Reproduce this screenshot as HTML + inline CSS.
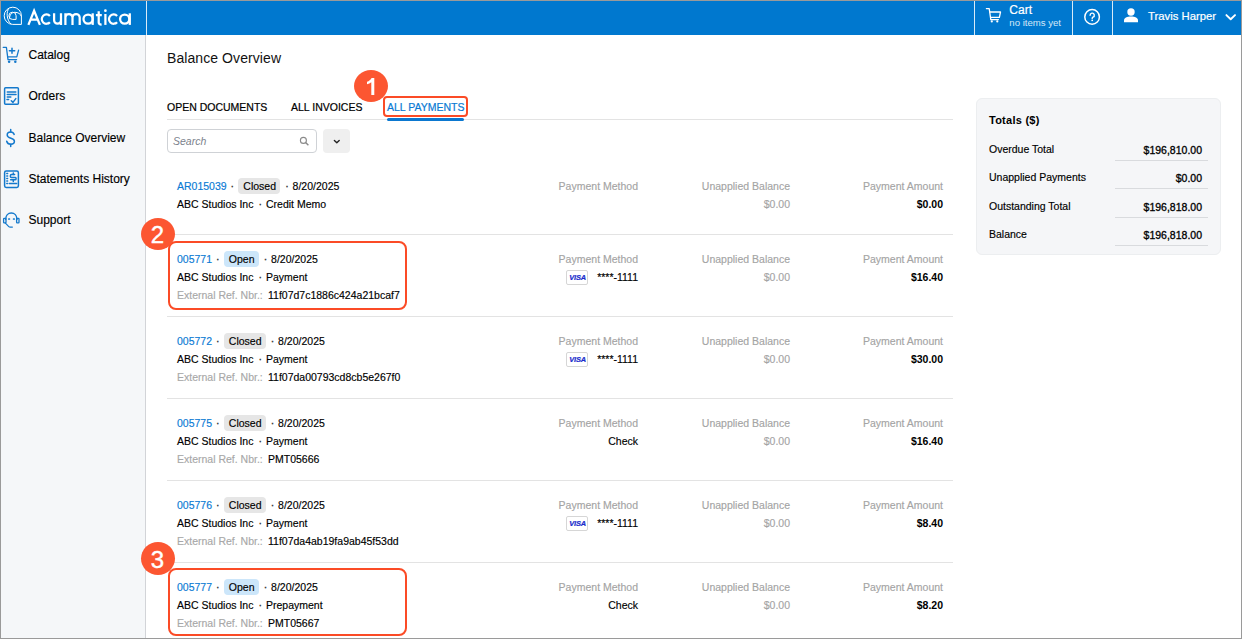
<!DOCTYPE html>
<html><head><meta charset="utf-8">
<style>
*{margin:0;padding:0;box-sizing:border-box}
html,body{width:1242px;height:639px;overflow:hidden;background:#fff}
body{font-family:"Liberation Sans",sans-serif;color:#000;position:relative}
.abs{position:absolute;white-space:nowrap}
.frame{position:absolute;left:0;top:0;width:1242px;height:639px;border:1px solid #9a9a9a;z-index:50}
.hdr{position:absolute;left:0;top:0;width:1242px;height:35px;background:#0078cf}
.vsep{position:absolute;top:0;width:1px;height:35px;background:#d8ebf8}
.side{position:absolute;left:0;top:35px;width:146px;height:604px;background:#f5f7f9;border-right:1px solid #d2d4d8}
.nav{position:absolute;left:28.5px;font-size:12px;line-height:14px;color:#000;white-space:nowrap;-webkit-text-stroke:0.15px #000}
.t{font-size:10.5px;line-height:12px;color:#000;-webkit-text-stroke:0.15px currentColor}
.tv{-webkit-text-stroke:0.3px #000}
.link{color:#0a7ad4}
.dot{color:#333;-webkit-text-stroke:0.35px #333}
.lbl{color:#a8a8a8}
.hd{color:#a4a4a4}
.b{font-weight:bold;-webkit-text-stroke:0}
.sep{position:absolute;left:167px;width:786px;height:1px;background:#e3e3e3}
.badge{position:absolute;height:16px;border-radius:4px;font-size:10.5px;line-height:16px;text-align:center;padding-left:1px;color:#000;-webkit-text-stroke:0.15px #000}
.closed{background:#e6e6e6}
.open{background:#cce6fa}
.red{position:absolute;border:2px solid #fb4b26;border-radius:8px}
.circ{position:absolute;width:34px;height:32px;border-radius:50%;background:#fc5631;color:#fff;font-size:24px;line-height:34px;text-align:center;-webkit-text-stroke:0.4px #fff}
.visa{position:absolute;width:22px;height:15px;border:1px solid #d6d6d6;border-radius:2px;background:#fff}
.visa span{position:absolute;left:2.3px;top:1.8px;font-size:7.4px;line-height:9px;font-weight:bold;font-style:italic;color:#1a2ccc;letter-spacing:-0.15px;-webkit-text-stroke:0.2px #1a2ccc}
.tab{position:absolute;top:101px;font-size:10.5px;line-height:12px;color:#000;white-space:nowrap;-webkit-text-stroke:0.2px currentColor}
svg{position:absolute;overflow:visible}
</style></head><body>
<div class="hdr"></div>
<div class="vsep" style="left:146px"></div>
<div class="vsep" style="left:974px"></div>
<div class="vsep" style="left:1072px"></div>
<div class="vsep" style="left:1112px"></div>
<!-- logo -->
<svg style="left:0;top:0" width="140" height="35" viewBox="0 0 140 35" fill="none" stroke="#fff" stroke-width="1">
<path d="M21.4 24.4 H12.8 A8.6 8.6 0 1 1 21.4 15.8 Z"/>
<path d="M8.9 8.4 C6.2 11.6 6.4 19.6 11 24.2"/>
<path d="M9.6 18.6 C9.4 14.6 12 12.3 14.8 12.3 C18 12.3 20.6 13.8 21.3 16.4"/>
<path d="M16.1 19.4 H12.6 A3.6 3.6 0 1 1 16.1 15.8 Z"/>
</svg>
<svg style="left:0;top:0" width="140" height="35" viewBox="0 0 140 35" fill="none" stroke="#fff" stroke-width="2.25">
<path d="M28.4 24.9 L34.1 10.8 L39.9 24.9 M30.9 19.5 H37.3"/>
<path d="M49.9 16 A4.65 4.65 0 1 0 49.9 22.2"/>
<path d="M54.1 13.3 V20.3 A3.45 3.45 0 0 0 61 20.3 M61 13.3 V24.9"/>
<path d="M65.4 24.9 V13.3 M65.4 17.6 A3.55 3.55 0 0 1 72.5 17.6 V24.9 M72.5 17.6 A3.6 3.6 0 0 1 79.7 17.6 V24.9"/>
<circle cx="88.1" cy="19.1" r="4.6"/>
<path d="M92.7 13.3 V24.9"/>
<path d="M98.7 11.3 V22.6 C98.7 24 99.4 24.6 101.6 24.6 M95.9 15 H101.8"/>
<path d="M105.4 14 V24.9"/>
<circle cx="105.4" cy="10.7" r="1.35" fill="#fff" stroke="none"/>
<path d="M117.1 16 A4.65 4.65 0 1 0 117.1 22.2"/>
<circle cx="124.7" cy="19.1" r="4.6"/>
<path d="M129.8 13.3 V24.9"/>
</svg>
<!-- header right -->
<svg style="left:0;top:0" width="1242" height="35" fill="none" stroke="#fff" stroke-width="1.3" stroke-linejoin="round" stroke-linecap="round">
<path d="M986.4 8.6 H989.2 L990.8 19.6 H998.4"/>
<path d="M990.2 12 H1000.5 L999.4 17.3 H991"/>
<circle cx="991.8" cy="21.4" r="1.1" fill="#fff" stroke="none"/>
<circle cx="997.3" cy="21.4" r="1.1" fill="#fff" stroke="none"/>
<circle cx="1092.1" cy="16.9" r="7.3" stroke-width="1.5"/>
<path d="M1090.1 15.3 A2.1 2.1 0 1 1 1093 17.2 C1092.4 17.6 1092.2 18 1092.2 18.6" stroke-width="1.4"/>
<rect x="1091.4" y="19.7" width="1.6" height="1.4" fill="#fff" stroke="none"/>
<path d="M1226.4 15.1 L1230.7 19.3 L1235 15.1" stroke-width="1.9"/>
</svg>
<svg style="left:0;top:0" width="1242" height="35" fill="#fff">
<circle cx="1131" cy="12" r="3.7"/>
<path d="M1124 22.3 V20.6 C1124 18 1127 16.6 1131 16.6 C1135 16.6 1138 18 1138 20.6 V22.3 Z"/>
</svg>
<div class="abs" style="left:1009.3px;top:3px;font-size:12px;line-height:14px;color:#fff;-webkit-text-stroke:0.2px #fff">Cart</div>
<div class="abs" style="left:1009.3px;top:17px;font-size:9.6px;line-height:11px;color:#d5e8f7">no items yet</div>
<div class="abs" style="left:1148px;top:10px;font-size:11.3px;line-height:12px;color:#fff;-webkit-text-stroke:0.2px #fff">Travis Harper</div>

<!-- sidebar -->
<div class="side"></div>
<svg style="left:0;top:0" width="146" height="240" fill="none" stroke="#1479cc" stroke-width="1.5" stroke-linecap="round" stroke-linejoin="round">
<!-- cart plus -->
<path d="M3.2 47.3 H6.4 L8 59.6 H16.6" stroke-width="1.3"/>
<path d="M7.8 56.8 H16.8 L18.6 50.2" stroke-width="1.3"/>
<path d="M9.4 50.7 H14.7 M12 48.2 V53.3"/>
<circle cx="9.1" cy="61.8" r="1.25" fill="#1479cc" stroke="none"/>
<circle cx="15.3" cy="61.8" r="1.25" fill="#1479cc" stroke="none"/>
<!-- orders -->
<rect x="4.6" y="87.7" width="13.8" height="16.6" rx="1"/>
<path d="M7.3 91.9 H15.8 M7.3 94.4 H16 M7.3 96.9 H10.8 M7 99.4 H8.6"/>
<path d="M11.3 100.8 L13 102.4 L15.8 98.6"/>
<!-- dollar -->
<path d="M14.2 134.4 C13.6 132.7 12.4 131.9 10.7 131.9 C8.6 131.9 7.2 133.1 7.2 134.9 C7.2 139 14.4 137.6 14.4 141.3 C14.4 143.2 12.8 144.3 10.7 144.3 C8.7 144.3 7.2 143.3 6.7 141.3"/>
<path d="M10.7 129.4 V131.9 M10.7 144.3 V146.5"/>
<!-- statements -->
<rect x="4.6" y="171.1" width="13.8" height="16.3" rx="1.6"/>
<path d="M6.8 173.5 H7.6 M6.8 176 H7.6 M6.8 178.5 H7.6 M6.8 181 H7.6 M6.8 183.5 H7.6"/>
<path d="M9.4 183.5 H16.6"/>
<path d="M14.6 174.6 H11.4 C10.6 174.6 10.4 175.1 10.4 175.8 V176.6 C10.4 177.3 10.8 177.6 11.4 177.6 H15.4 C16.1 177.6 16.1 178.2 16.1 178.7 C16.1 179.4 15.6 179.8 15 179.8 H10.6"/>
<path d="M13.3 173 V174.6 M13.3 179.8 V181.6"/>
<!-- support -->
<path d="M5.6 219.3 C5.8 215.6 8.2 213.1 11.3 213.1 C14.4 213.1 16.8 215.6 17 219.3"/>
<rect x="3.6" y="218.4" width="2.4" height="4.4" rx="0.6" stroke-width="1.3"/>
<rect x="16.6" y="218.4" width="2.4" height="4.4" rx="0.6" stroke-width="1.3"/>
<path d="M5.4 223.2 L8.8 226.6 C9.2 227 9.6 227.1 10.2 227.1 H12.4" stroke-width="1.2"/>
<path d="M8.8 219 H9.4 M13.6 219 H14.2" stroke-width="1.7"/>
</svg>
<div class="nav" style="top:48px">Catalog</div>
<div class="nav" style="top:89px">Orders</div>
<div class="nav" style="top:131px">Balance Overview</div>
<div class="nav" style="top:172px">Statements History</div>
<div class="nav" style="top:213px">Support</div>

<!-- main -->
<div class="abs" style="left:167px;top:50px;font-size:14px;line-height:16px;color:#111;letter-spacing:0.08px">Balance Overview</div>
<div class="tab" style="left:167px">OPEN DOCUMENTS</div>
<div class="tab" style="left:291px">ALL INVOICES</div>
<div class="tab" style="left:387px;color:#0a7ad4">ALL PAYMENTS</div>
<div class="abs" style="left:167px;top:119px;width:786px;height:1px;background:#e3e3e3"></div>
<div class="abs" style="left:387px;top:118px;width:77px;height:2.5px;background:#0b78d0;border-radius:2px"></div>
<!-- search -->
<div class="abs" style="left:167px;top:129px;width:150px;height:24px;border:1px solid #cfd2d6;border-radius:4px;background:#fff"></div>
<div class="abs" style="left:173px;top:135px;font-size:10.5px;line-height:12px;color:#7c828c;font-style:italic">Search</div>
<svg style="left:0;top:0" width="360" height="160" fill="none" stroke="#8a8a8a" stroke-width="1.1">
<circle cx="303.4" cy="140.4" r="3"/>
<path d="M305.6 142.6 L308.4 145.3" stroke-width="1.4"/>
</svg>
<div class="abs" style="left:323px;top:129px;width:27px;height:24px;background:#efefef;border-radius:4px"></div>
<svg style="left:0;top:0" width="360" height="160" fill="none" stroke="#222" stroke-width="1.4" stroke-linecap="round" stroke-linejoin="round">
<path d="M334.4 140.4 L336.8 142.7 L339.2 140.4"/>
</svg>

<div class="abs t link" style="left:177px;top:180px;">AR015039</div>
<div class="abs t dot" style="left:230.6px;top:180px;">&middot;</div>
<div class="badge closed" style="left:238.1px;top:178px;width:42.2px">Closed</div>
<div class="abs t dot" style="left:285.3px;top:180px;">&middot;</div>
<div class="abs t " style="left:292.6px;top:180px;">8/20/2025</div>
<div class="abs t " style="left:177px;top:198px;">ABC Studios Inc</div>
<div class="abs t dot" style="left:258.5px;top:198px;">&middot;</div>
<div class="abs t " style="left:266.0px;top:198px;">Credit Memo</div>
<div class="abs t hd" style="right:604px;top:180px;">Payment Method</div>
<div class="abs t hd" style="right:452px;top:180px;">Unapplied Balance</div>
<div class="abs t hd" style="right:299px;top:180px;">Payment Amount</div>
<div class="abs t hd" style="right:452px;top:198px;">$0.00</div>
<div class="abs t b" style="right:299px;top:198px;">$0.00</div>
<div class="sep" style="top:234px"></div>
<div class="abs t link" style="left:177px;top:253px;">005771</div>
<div class="abs t dot" style="left:216.1px;top:253px;">&middot;</div>
<div class="badge open" style="left:223.6px;top:251px;width:35.2px">Open</div>
<div class="abs t dot" style="left:263.8px;top:253px;">&middot;</div>
<div class="abs t " style="left:271.1px;top:253px;">8/20/2025</div>
<div class="abs t " style="left:177px;top:271px;">ABC Studios Inc</div>
<div class="abs t dot" style="left:258.5px;top:271px;">&middot;</div>
<div class="abs t " style="left:266.0px;top:271px;">Payment</div>
<div class="abs t lbl" style="left:177px;top:289px;">External Ref. Nbr.:</div>
<div class="abs t " style="left:268px;top:289px;">11f07d7c1886c424a21bcaf7</div>
<div class="abs t hd" style="right:604px;top:253px;">Payment Method</div>
<div class="abs t hd" style="right:452px;top:253px;">Unapplied Balance</div>
<div class="abs t hd" style="right:299px;top:253px;">Payment Amount</div>
<div class="abs t hd" style="right:452px;top:271px;">$0.00</div>
<div class="abs t b" style="right:299px;top:271px;">$16.40</div>
<div class="visa" style="left:566px;top:270px"><span>VISA</span></div>
<div class="abs t " style="right:604px;top:271px;">****-1111</div>
<div class="sep" style="top:316px"></div>
<div class="abs t link" style="left:177px;top:335px;">005772</div>
<div class="abs t dot" style="left:216.1px;top:335px;">&middot;</div>
<div class="badge closed" style="left:223.6px;top:333px;width:42.2px">Closed</div>
<div class="abs t dot" style="left:270.8px;top:335px;">&middot;</div>
<div class="abs t " style="left:278.1px;top:335px;">8/20/2025</div>
<div class="abs t " style="left:177px;top:353px;">ABC Studios Inc</div>
<div class="abs t dot" style="left:258.5px;top:353px;">&middot;</div>
<div class="abs t " style="left:266.0px;top:353px;">Payment</div>
<div class="abs t lbl" style="left:177px;top:371px;">External Ref. Nbr.:</div>
<div class="abs t " style="left:268px;top:371px;">11f07da00793cd8cb5e267f0</div>
<div class="abs t hd" style="right:604px;top:335px;">Payment Method</div>
<div class="abs t hd" style="right:452px;top:335px;">Unapplied Balance</div>
<div class="abs t hd" style="right:299px;top:335px;">Payment Amount</div>
<div class="abs t hd" style="right:452px;top:353px;">$0.00</div>
<div class="abs t b" style="right:299px;top:353px;">$30.00</div>
<div class="visa" style="left:566px;top:352px"><span>VISA</span></div>
<div class="abs t " style="right:604px;top:353px;">****-1111</div>
<div class="sep" style="top:398px"></div>
<div class="abs t link" style="left:177px;top:417px;">005775</div>
<div class="abs t dot" style="left:216.1px;top:417px;">&middot;</div>
<div class="badge closed" style="left:223.6px;top:415px;width:42.2px">Closed</div>
<div class="abs t dot" style="left:270.8px;top:417px;">&middot;</div>
<div class="abs t " style="left:278.1px;top:417px;">8/20/2025</div>
<div class="abs t " style="left:177px;top:435px;">ABC Studios Inc</div>
<div class="abs t dot" style="left:258.5px;top:435px;">&middot;</div>
<div class="abs t " style="left:266.0px;top:435px;">Payment</div>
<div class="abs t lbl" style="left:177px;top:453px;">External Ref. Nbr.:</div>
<div class="abs t " style="left:268px;top:453px;">PMT05666</div>
<div class="abs t hd" style="right:604px;top:417px;">Payment Method</div>
<div class="abs t hd" style="right:452px;top:417px;">Unapplied Balance</div>
<div class="abs t hd" style="right:299px;top:417px;">Payment Amount</div>
<div class="abs t hd" style="right:452px;top:435px;">$0.00</div>
<div class="abs t b" style="right:299px;top:435px;">$16.40</div>
<div class="abs t " style="right:604px;top:435px;">Check</div>
<div class="sep" style="top:480px"></div>
<div class="abs t link" style="left:177px;top:499px;">005776</div>
<div class="abs t dot" style="left:216.1px;top:499px;">&middot;</div>
<div class="badge closed" style="left:223.6px;top:497px;width:42.2px">Closed</div>
<div class="abs t dot" style="left:270.8px;top:499px;">&middot;</div>
<div class="abs t " style="left:278.1px;top:499px;">8/20/2025</div>
<div class="abs t " style="left:177px;top:517px;">ABC Studios Inc</div>
<div class="abs t dot" style="left:258.5px;top:517px;">&middot;</div>
<div class="abs t " style="left:266.0px;top:517px;">Payment</div>
<div class="abs t lbl" style="left:177px;top:535px;">External Ref. Nbr.:</div>
<div class="abs t " style="left:268px;top:535px;">11f07da4ab19fa9ab45f53dd</div>
<div class="abs t hd" style="right:604px;top:499px;">Payment Method</div>
<div class="abs t hd" style="right:452px;top:499px;">Unapplied Balance</div>
<div class="abs t hd" style="right:299px;top:499px;">Payment Amount</div>
<div class="abs t hd" style="right:452px;top:517px;">$0.00</div>
<div class="abs t b" style="right:299px;top:517px;">$8.40</div>
<div class="visa" style="left:566px;top:516px"><span>VISA</span></div>
<div class="abs t " style="right:604px;top:517px;">****-1111</div>
<div class="sep" style="top:562px"></div>
<div class="abs t link" style="left:177px;top:581px;">005777</div>
<div class="abs t dot" style="left:216.1px;top:581px;">&middot;</div>
<div class="badge open" style="left:223.6px;top:579px;width:35.2px">Open</div>
<div class="abs t dot" style="left:263.8px;top:581px;">&middot;</div>
<div class="abs t " style="left:271.1px;top:581px;">8/20/2025</div>
<div class="abs t " style="left:177px;top:599px;">ABC Studios Inc</div>
<div class="abs t dot" style="left:258.5px;top:599px;">&middot;</div>
<div class="abs t " style="left:266.0px;top:599px;">Prepayment</div>
<div class="abs t lbl" style="left:177px;top:617px;">External Ref. Nbr.:</div>
<div class="abs t " style="left:268px;top:617px;">PMT05667</div>
<div class="abs t hd" style="right:604px;top:581px;">Payment Method</div>
<div class="abs t hd" style="right:452px;top:581px;">Unapplied Balance</div>
<div class="abs t hd" style="right:299px;top:581px;">Payment Amount</div>
<div class="abs t hd" style="right:452px;top:599px;">$0.00</div>
<div class="abs t b" style="right:299px;top:599px;">$8.20</div>
<div class="abs t " style="right:604px;top:599px;">Check</div>

<!-- totals -->
<div class="abs" style="left:976px;top:98px;width:245px;height:157px;background:#f5f6f8;border:1px solid #eceef0;border-radius:6px"></div>
<div class="abs t b" style="left:989px;top:114px;font-size:11px;letter-spacing:0.25px">Totals ($)</div>
<div class="abs t" style="left:989px;top:143px">Overdue Total</div>
<div class="abs t" style="left:989px;top:171px">Unapplied Payments</div>
<div class="abs t" style="left:989px;top:200px">Outstanding Total</div>
<div class="abs t" style="left:989px;top:228px">Balance</div>
<div class="abs t tv" style="right:40px;top:144px">$196,810.00</div>
<div class="abs t tv" style="right:40px;top:172px">$0.00</div>
<div class="abs t tv" style="right:40px;top:201px">$196,818.00</div>
<div class="abs t tv" style="right:40px;top:229px">$196,818.00</div>
<div class="abs" style="left:1115px;top:160px;width:93px;height:1px;background:#d9dbde"></div>
<div class="abs" style="left:1115px;top:188px;width:93px;height:1px;background:#d9dbde"></div>
<div class="abs" style="left:1115px;top:217px;width:93px;height:1px;background:#d9dbde"></div>
<div class="abs" style="left:1115px;top:245px;width:93px;height:1px;background:#d9dbde"></div>

<!-- annotations -->
<div class="red" style="left:383px;top:96px;width:85px;height:21px;border-radius:4px"></div>
<div class="red" style="left:168px;top:241px;width:239px;height:69px"></div>
<div class="red" style="left:168px;top:568px;width:239px;height:68px"></div>
<div class="circ" style="left:354px;top:70px"></div>
<svg style="left:0;top:0;z-index:5" width="400" height="100" fill="#fff" stroke="none">
<path d="M371.6 77.9 H374.3 V95.1 H371.3 V82.3 C370.1 83.2 368.6 83.9 367 84.3 V81.8 C369 81.1 370.7 79.7 371.6 77.9 Z"/>
</svg>
<div class="circ" style="left:140.5px;top:218px">2</div>
<div class="circ" style="left:140.5px;top:542px;height:33px;line-height:35px">3</div>

<div class="frame"></div>
</body></html>
